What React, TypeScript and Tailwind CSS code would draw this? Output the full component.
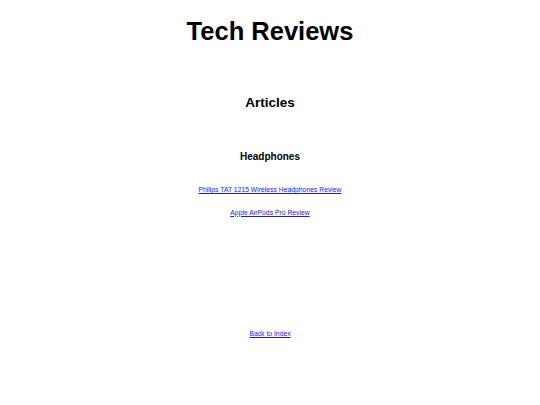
import React from 'react';

const articles = [
  { title: 'Philips TAT 1215 Wireless Headphones Review', href: '#philips-tat-1215' },
  { title: 'Apple AirPods Pro Review', href: '#apple-airpods-pro' },
];

const App = () => {
  return (
    <div className="min-h-screen w-full bg-white font-['Liberation_Sans',Arial,sans-serif] text-black">
      <div className="flex flex-col items-center text-center">
        <h1 className="mt-[19px] text-[25.5px] leading-none font-bold">Tech Reviews</h1>

        <section className="flex flex-col items-center">
          <h2 className="mt-[51px] text-[13.5px] leading-none font-bold">Articles</h2>

          <h3 className="mt-[43px] text-[10px] leading-none font-bold">Headphones</h3>

          {/* Lista de reseñas */}
          <ul className="mt-[25px] flex flex-col items-center gap-[16px]">
            {articles.map((a) => (
              <li key={a.href} className="text-[6.8px] leading-none">
                <a href={a.href} className="text-[#1a1ae6] underline">
                  {a.title}
                </a>
              </li>
            ))}
          </ul>
        </section>

        <a href="#index" className="mt-[114px] text-[6.8px] leading-none text-[#1a1ae6] underline">
          Back to Index
        </a>
      </div>
    </div>
  );
};

export default App;
